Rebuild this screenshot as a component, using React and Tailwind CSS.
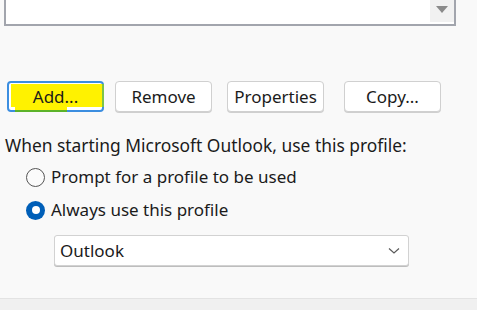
export default function App() {
  const btn =
    "relative h-[31px] w-[97px] rounded-[4px] border border-[#d0d0d0] bg-white text-[17px] text-[#1b1b1b] shadow-[0_1px_0_#cfcfcf] flex items-center justify-center";

  return (
    <div
      className="w-[477px] h-[310px] overflow-hidden bg-[#f9f9f9] flex flex-col text-[#1b1b1b]"
      style={{ fontFamily: '"Noto Sans", "Open Sans", sans-serif' }}
    >
      {/* LIST BOX (cut off at the top) */}
      <div className="ml-[4px] w-[452px] h-[26px] border-x-2 border-b-2 border-[#a2a5ad] bg-white flex justify-end">
        <div className="w-[24px] h-[22px] bg-[#f1f1f1] flex items-start justify-center pt-[6px]">
          <div className="w-0 h-0 border-x-[6px] border-x-transparent border-t-[7px] border-t-[#8a8a8a]" />
        </div>
      </div>

      {/* BUTTONS */}
      <div className="flex mt-[55px] h-[31px]">
        <div className="ml-[7px] relative h-[31px] w-[97px] rounded-[4px] border-2 border-[#3c8ee0] bg-white flex items-center justify-center text-[17px]">
          {/* highlighter */}
          <div className="absolute left-[2px] top-[1px] right-[-2px] h-[23px] bg-[#fff200]" />
          <div className="absolute left-[6px] top-[23px] w-[52px] h-[6px] bg-[#fff200]" />
          <div className="absolute left-[6px] top-[27px] w-[52px] h-[2px] bg-[#5cb32a]" />
          <div className="absolute right-[-2px] top-[1px] w-[2px] h-[23px] bg-[#7cc34a]" />
          <span className="relative">Add...</span>
        </div>
        <div className={`${btn} ml-[11px]`}>Remove</div>
        <div className={`${btn} ml-[15px]`}>Properties</div>
        <div className={`${btn} ml-[20px]`}>Copy...</div>
      </div>

      {/* PROFILE CHOICE */}
      <div className="ml-[5px] mt-[23px] text-[17.4px] leading-[20px]">
        When starting Microsoft Outlook, use this profile:
      </div>

      <div className="ml-[26px] mt-[12px] flex items-center gap-[6px] h-[20px] text-[17px]">
        <div className="w-[19px] h-[19px] rounded-full border border-[#555] bg-[#fbfbfb]" />
        <span>Prompt for a profile to be used</span>
      </div>

      <div className="ml-[26px] mt-[13px] flex items-center gap-[6px] h-[20px] text-[17px]">
        <div className="w-[19px] h-[19px] rounded-full bg-[#005fb8] flex items-center justify-center">
          <div className="w-[8px] h-[8px] rounded-full bg-white" />
        </div>
        <span>Always use this profile</span>
      </div>

      {/* DROPDOWN */}
      <div className="ml-[54px] mt-[15px] w-[355px] h-[31px] rounded-[3px] border border-[#d2d2d2] bg-white shadow-[0_1px_0_#bdbdbd] flex items-center justify-between pl-[5px] pr-[8px] text-[17px]">
        <span>Outlook</span>
        <svg width="12" height="8" viewBox="0 0 12 8" fill="none">
          <path d="M1 1.5 L6 6 L11 1.5" stroke="#5a5a5a" strokeWidth="1.2" />
        </svg>
      </div>

      {/* FOOTER BAND */}
      <div className="mt-auto h-[12px] border-t border-[#e3e3e3] bg-[#f0f0f0]" />
    </div>
  );
}
